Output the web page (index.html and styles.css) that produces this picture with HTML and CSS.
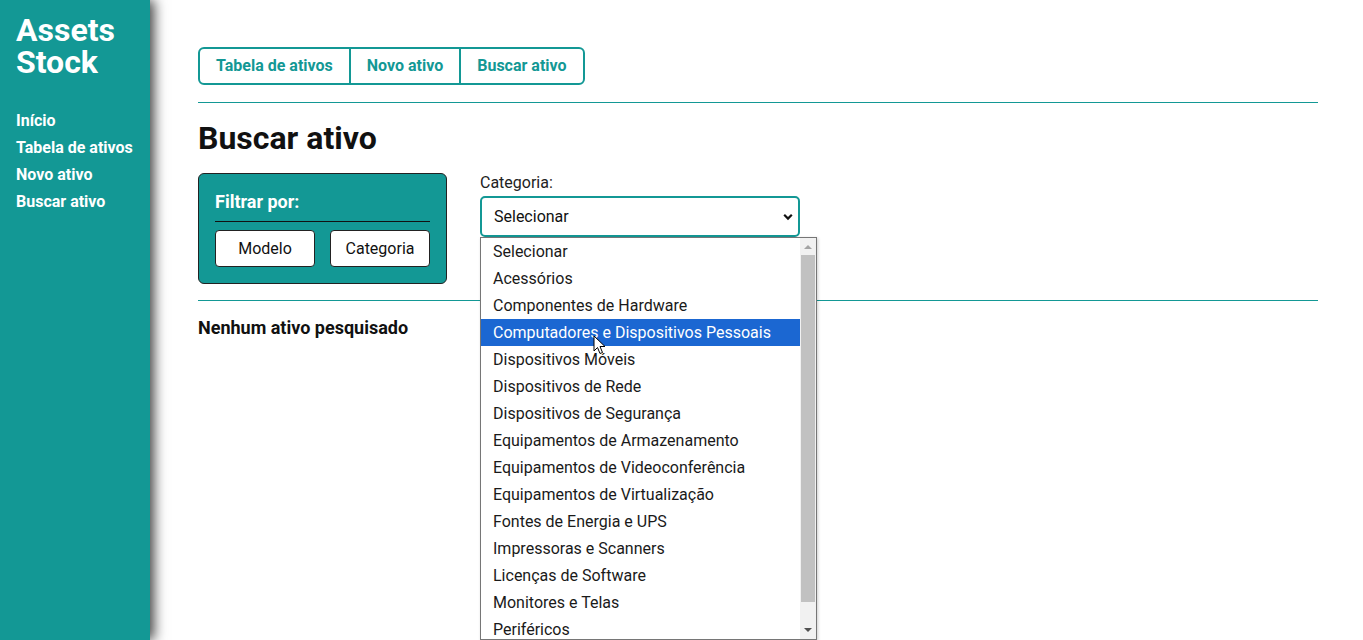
FILE: index.html
```html
<!DOCTYPE html>
<html lang="pt-BR">
<head>
<meta charset="utf-8">
<title>Assets Stock</title>
<link rel="stylesheet" href="styles.css">
</head>
<body>
<div class="layout">
  <aside class="sidebar">
    <div class="brand"><div>Assets</div><div>Stock</div></div>
    <nav class="side-nav">
      <a href="#">Início</a>
      <a href="#">Tabela de ativos</a>
      <a href="#">Novo ativo</a>
      <a href="#">Buscar ativo</a>
    </nav>
  </aside>
  <main class="main">
    <div class="tabs">
      <a class="tab" href="#">Tabela de ativos</a>
      <a class="tab" href="#">Novo ativo</a>
      <a class="tab" href="#">Buscar ativo</a>
    </div>
    <hr class="rule">
    <h1 class="title">Buscar ativo</h1>
    <div class="search-row">
      <div class="filter-box">
        <div class="filter-title">Filtrar por:</div>
        <div class="filter-buttons">
          <button class="filter-btn">Modelo</button>
          <button class="filter-btn">Categoria</button>
        </div>
      </div>
      <div class="field">
        <label class="field-label">Categoria:</label>
        <div class="select-wrap">
          <div class="select">
            <span>Selecionar</span>
            <svg class="chev" width="10" height="8" viewBox="0 0 10 8"><path d="M1.2 1.8 L5 5.6 L8.8 1.8" fill="none" stroke="#111" stroke-width="2.2"/></svg>
          </div>
          <div class="dropdown">
            <ul class="options">
              <li>Selecionar</li>
              <li>Acessórios</li>
              <li>Componentes de Hardware</li>
              <li class="active">Computadores e Dispositivos Pessoais</li>
              <li>Dispositivos Móveis</li>
              <li>Dispositivos de Rede</li>
              <li>Dispositivos de Segurança</li>
              <li>Equipamentos de Armazenamento</li>
              <li>Equipamentos de Videoconferência</li>
              <li>Equipamentos de Virtualização</li>
              <li>Fontes de Energia e UPS</li>
              <li>Impressoras e Scanners</li>
              <li>Licenças de Software</li>
              <li>Monitores e Telas</li>
              <li>Periféricos</li>
            </ul>
            <div class="scrollbar">
              <div class="arrow up"></div>
              <div class="thumb"></div>
              <div class="arrow down"></div>
            </div>
            <svg class="cursor" width="14" height="20" viewBox="0 0 14 20"><path d="M1 1 L1 16 L4.5 12.5 L7 18.5 L9.5 17.5 L7 11.5 L12 11.5 Z" fill="#fff" stroke="#000" stroke-width="1"/></svg>
          </div>
        </div>
      </div>
    </div>
    <hr class="rule rule-2">
    <p class="empty">Nenhum ativo pesquisado</p>
  </main>
</div>
</body>
</html>
```
FILE: styles.css
```css
* { box-sizing: border-box; }
html, body { margin: 0; padding: 0; height: 100%; }
body {
  font-family: Roboto, "Noto Sans", sans-serif;
  color: #111;
  background: #fff;
  overflow: hidden;
}
.layout { display: flex; height: 640px; }
.sidebar {
  width: 150px;
  flex: 0 0 150px;
  background: #139895;
  padding: 14px 16px;
  box-shadow: 4px 0 12px rgba(0,0,0,0.75);
  position: relative;
  z-index: 2;
}
.brand {
  color: #fff;
  font-weight: 700;
  font-size: 32px;
  line-height: 32px;
}
.side-nav {
  display: flex;
  flex-direction: column;
  margin-top: 29px;
}
.side-nav a {
  color: #fff;
  text-decoration: none;
  font-weight: 700;
  font-size: 16px;
  line-height: 27px;
}
.main {
  flex: 1;
  padding: 47px 45px 0 48px;
}
.tabs {
  display: inline-flex;
  border: 2px solid #139895;
  border-radius: 6px;
}
.tab {
  display: block;
  color: #139895;
  text-decoration: none;
  font-weight: 700;
  font-size: 16px;
  line-height: 34px;
  padding: 0 16px;
}
.tab + .tab { border-left: 2px solid #139895; }
.rule {
  border: 0;
  border-top: 1px solid #139895;
  margin: 17px 0 0;
}
.title {
  font-size: 32px;
  font-weight: 700;
  margin: 15px 0 15px;
  line-height: 40px;
}
.search-row {
  display: flex;
  gap: 33px;
  align-items: flex-start;
}
.filter-box {
  width: 249px;
  background: #139895;
  border: 1px solid #222;
  border-radius: 6px;
  padding: 16px 16px 16px;
}
.filter-title {
  color: #fff;
  font-weight: 700;
  font-size: 18px;
  line-height: 24px;
  padding-bottom: 7px;
  border-bottom: 1px solid #111;
}
.filter-buttons {
  display: flex;
  justify-content: space-between;
  margin-top: 8px;
}
.filter-btn {
  width: 100px;
  height: 37px;
  background: #fff;
  border: 1px solid #222;
  border-radius: 4px;
  font-family: Roboto, sans-serif;
  font-size: 16px;
  color: #111;
}
.field {
  display: flex;
  flex-direction: column;
}
.field-label {
  font-size: 16px;
  color: #222;
  line-height: 20px;
  margin-bottom: 3px;
}
.select-wrap { position: relative; }
.select {
  width: 320px;
  height: 41px;
  border: 2px solid #139895;
  border-radius: 5px;
  display: flex;
  align-items: center;
  justify-content: space-between;
  padding: 0 5px 0 12px;
  font-size: 16px;
  color: #111;
}
.dropdown {
  position: absolute;
  left: 0;
  top: 41px;
  width: 337px;
  height: 403px;
  background: #fff;
  border: 1px solid #767676;
  display: flex;
  z-index: 5;
  box-shadow: 1px 1px 3px rgba(0,0,0,0.2);
}
.options {
  list-style: none;
  margin: 0;
  padding: 0;
  flex: 1;
  overflow: hidden;
}
.options li {
  height: 27px;
  line-height: 27px;
  padding-left: 12px;
  font-size: 16px;
  color: #1a1a1a;
  white-space: nowrap;
}
.options li.active {
  background: #1b67d2;
  color: #fff;
}
.scrollbar {
  width: 16px;
  background: #f1f1f1;
  display: flex;
  flex-direction: column;
  align-items: center;
}
.arrow { width: 0; height: 0; border-left: 4px solid transparent; border-right: 4px solid transparent; }
.arrow.up { border-bottom: 4px solid #a3a3a3; margin: 7px 0 6px; }
.arrow.down { border-top: 4px solid #505050; margin: 6px 0 7px; }
.thumb {
  width: 14px;
  flex: 1;
  background: #c1c1c1;
  margin-bottom: 20px;
}
.cursor {
  position: absolute;
  left: 112px;
  top: 97px;
}
.rule-2 { margin-top: 16px; }
.empty {
  font-weight: 700;
  font-size: 18px;
  margin: 16px 0 0;
}
```
